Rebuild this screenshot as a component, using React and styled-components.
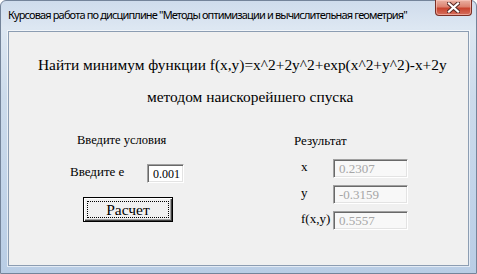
import React from 'react';
import styled, { createGlobalStyle } from 'styled-components';

const Global = createGlobalStyle`
  html, body { margin: 0; padding: 0; background: #ffffff; }
  body { width: 477px; height: 274px; overflow: hidden; }
`;

const Window = styled.div`
  width: 477px;
  height: 274px;
  box-sizing: border-box;
  display: flex;
  flex-direction: column;
  background: linear-gradient(180deg, #cfdcec 0%, #dde7f2 10%, #ccdbeb 35%, #c2d4e9 70%, #b9cde5 100%);
  border: 1px solid #74849a;
  border-radius: 6px 6px 0 0;
`;

const TitleBar = styled.div`
  height: 30px;
  flex: none;
  display: flex;
  align-items: flex-start;
  padding: 0 4px 0 7px;
`;

const Title = styled.div`
  flex: 1;
  margin-top: 7px;
  font-family: "Noto Sans", sans-serif;
  font-size: 11px;
  letter-spacing: -0.85px;
  line-height: 14px;
  color: #000;
  white-space: nowrap;
  overflow: hidden;
`;

const CloseButton = styled.div`
  width: 37px;
  height: 16px;
  flex: none;
  margin-top: -1px;
  box-sizing: border-box;
  display: flex;
  align-items: center;
  justify-content: center;
  border: 1px solid #7a2f25;
  border-top: none;
  border-radius: 0 0 4px 4px;
  background: linear-gradient(180deg, #eab1a3 0%, #dc8270 45%, #c9442f 55%, #d56f5d 100%);
  box-shadow: inset 0 0 0 1px rgba(255, 210, 200, 0.55);
`;

const Client = styled.div`
  flex: 1;
  margin: 0 7px 7px 7px;
  border: 1px solid #8c9db2;
  box-shadow: 0 0 0 1px rgba(255, 255, 255, 0.6);
  background: #f0f0f0;
  display: flex;
  flex-direction: column;
  padding-top: 24px;
  font-family: "Liberation Serif", "Times New Roman", serif;
  color: #000;
`;

const Heading = styled.div`
  font-size: 15.4px;
  line-height: 18px;
  white-space: nowrap;
  padding-left: ${p => p.$indent}px;
  margin-top: ${p => p.$gap || 0}px;
`;

const Columns = styled.div`
  display: flex;
  margin-top: 27px;
`;

const Panel = styled.div`
  display: flex;
  flex-direction: column;
  width: ${p => p.$width}px;
`;

const SectionTitle = styled.div`
  font-size: ${p => p.$size}px;
  line-height: 15px;
  white-space: nowrap;
  margin-left: ${p => p.$indent}px;
`;

const InputRow = styled.div`
  display: flex;
  align-items: flex-start;
  margin-top: 16px;
  margin-left: 61px;
`;

const RowLabel = styled.div`
  width: ${p => p.$width}px;
  font-size: 13px;
  line-height: 15px;
  white-space: nowrap;
`;

const Field = styled.div`
  width: ${p => p.$width}px;
  height: 19px;
  box-sizing: border-box;
  border: 1px solid;
  border-color: #a0a0a0 #ffffff #ffffff #a0a0a0;
  box-shadow: inset 1px 1px 0 #696969, inset -1px -1px 0 #e3e3e3;
  background: ${p => (p.$disabled ? '#f8f8f8' : '#ffffff')};
  color: ${p => (p.$disabled ? '#a6a6a6' : '#000000')};
  font-size: ${p => p.$size}px;
  line-height: 15px;
  padding: ${p => p.$top}px 0 0 5px;
  white-space: nowrap;
  overflow: hidden;
`;

const Button = styled.button`
  margin-top: 14px;
  margin-left: 74px;
  width: 90px;
  height: 25px;
  padding: 0;
  border: 1px solid #000;
  background: #f0f0f0;
  box-shadow: inset 1px 1px 0 #ffffff, inset -1px -1px 0 #404040, inset -2px -2px 0 #a0a0a0;
  outline: 1px dotted #000;
  outline-offset: -5px;
  font-family: "Liberation Serif", "Times New Roman", serif;
  font-size: 15.5px;
  line-height: 18px;
  color: #000;
`;

const ResultGrid = styled.div`
  display: grid;
  grid-template-columns: 32px 75px;
  row-gap: 7px;
  margin-top: 11px;
  margin-left: 22px;
`;

const results = [
  ['x', '0.2307'],
  ['y', '-0.3159'],
  ['f(x,y)', '0.5557'],
];

export default function App() {
  return (
    <>
      <Global />
      <Window>
        <TitleBar>
          <Title>Курсовая работа по дисциплине "Методы оптимизации и вычислительная геометрия"</Title>
          <CloseButton>
            <svg width="13" height="11" viewBox="0 0 13 11">
              <path d="M2 1.5 L11 9.5 M11 1.5 L2 9.5" stroke="#5a2a25" strokeWidth="4.2" strokeLinecap="square" />
              <path d="M2 1.5 L11 9.5 M11 1.5 L2 9.5" stroke="#ffffff" strokeWidth="2.2" strokeLinecap="square" />
            </svg>
          </CloseButton>
        </TitleBar>
        <Client>
          <Heading $indent={29}>Найти минимум функции f(x,y)=x^2+2y^2+exp(x^2+y^2)-x+2y</Heading>
          <Heading $indent={138} $gap={14}>методом наискорейшего спуска</Heading>
          <Columns>
            <Panel $width={270}>
              <SectionTitle $indent={68} $size={12.5}>Введите условия</SectionTitle>
              <InputRow>
                <RowLabel $width={77}>Введите е</RowLabel>
                <Field $width={37} $size={12} $top={2}>0.001</Field>
              </InputRow>
              <Button>Расчет</Button>
            </Panel>
            <Panel $width={180}>
              <SectionTitle $indent={15} $size={13}>Результат</SectionTitle>
              <ResultGrid>
                {results.map(([label, value]) => (
                  <React.Fragment key={label}>
                    <RowLabel $width={32}>{label}</RowLabel>
                    <Field $width={75} $size={13} $top={1} $disabled>{value}</Field>
                  </React.Fragment>
                ))}
              </ResultGrid>
            </Panel>
          </Columns>
        </Client>
      </Window>
    </>
  );
}
